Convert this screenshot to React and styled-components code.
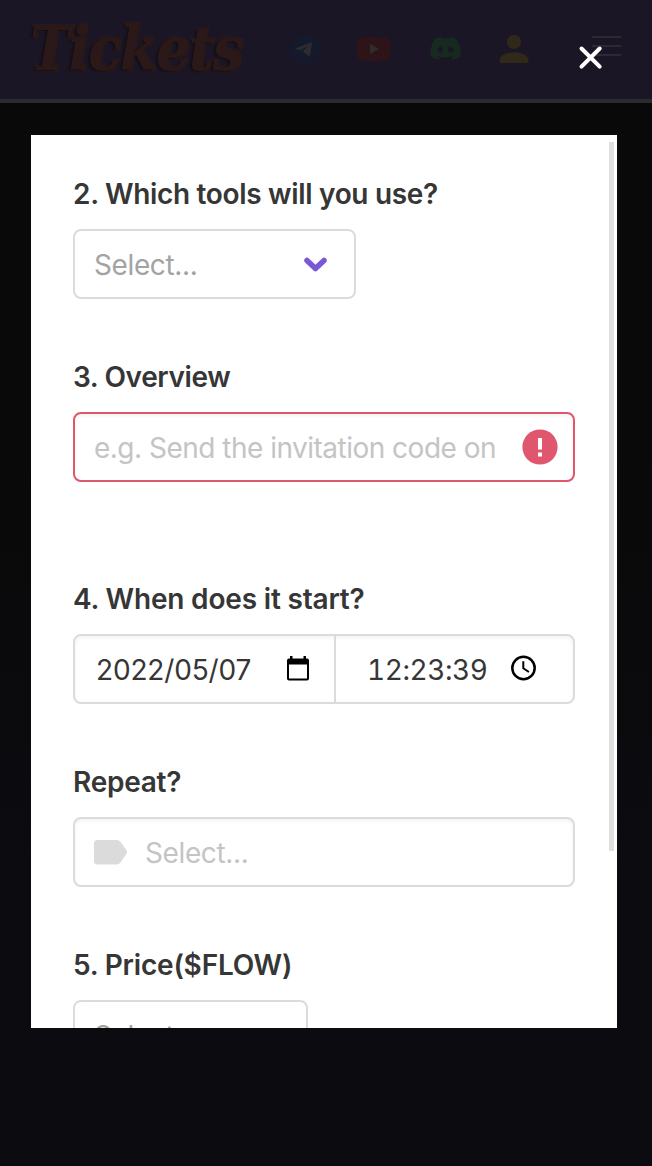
import React from "react";
import styled, { createGlobalStyle } from "styled-components";
import { FaDiscord } from "react-icons/fa";

const GlobalStyle = createGlobalStyle`
  * { box-sizing: border-box; }
  html, body { margin: 0; background: #0c0b10; }
  body { font-family: Inter, "Liberation Sans", sans-serif; overflow: hidden; }
`;

const Page = styled.div`
  position: relative;
  width: 652px;
  height: 1166px;
  overflow: hidden;
  background: linear-gradient(180deg, #090909 0%, #090909 40%, #0c0b10 75%, #0c0b10 100%);
`;

const Header = styled.header`
  display: flex;
  align-items: center;
  height: 103px;
  padding: 0 31px 2px 30px;
  background: #1b1626;
  border-bottom: 4px solid #2b2a2d;
`;

const Logo = styled.div`
  width: 259.5px;
  flex: none;
  padding-top: 3px;
  font: italic 700 59px/70px "DejaVu Serif Condensed", "DejaVu Serif", serif;
  font-stretch: condensed;
  letter-spacing: -0.7px;
  color: #2a1918;
  -webkit-text-stroke: 4px #2a1918;
  paint-order: stroke fill;
  text-shadow: -2px 1px 2px #110e18;
  white-space: nowrap;
`;

const Social = styled.nav`
  display: flex;
  align-items: center;
  gap: 37.5px;
  flex: 1;
  svg { display: block; flex: none; }
`;

const MenuLines = styled.div`
  display: flex;
  flex-direction: column;
  gap: 7px;
  width: 29px;
  margin-top: -5px;
`;

const MenuLine = styled.span`
  height: 2px;
  background: #2c2931;
`;

const CloseButton = styled.button`
  position: absolute;
  left: 578px;
  top: 45px;
  padding: 0;
  border: 0;
  background: none;
  line-height: 0;
`;

const Modal = styled.main`
  display: flex;
  width: 586px;
  height: 893px;
  margin: 32px 0 0 31px;
  padding: 7px 3px 0 42px;
  overflow: hidden;
  background: #fff;
`;

const Form = styled.form`
  width: 502px;
  flex: none;
  padding-top: 31px;
`;

const ScrollThumb = styled.div`
  width: 5px;
  height: 709px;
  margin-left: auto;
  background: #dfdfdf;
`;

const Field = styled.section`
  margin-bottom: ${(p) => p.$gap || "57px"};
`;

const Label = styled.h2`
  margin: 0 0 14px;
  font-size: 28px;
  font-weight: 600;
  line-height: 42px;
  letter-spacing: ${(p) => p.$tracking || "0"};
  color: #363636;
  white-space: nowrap;
`;

const Control = styled.div`
  display: flex;
  align-items: center;
  width: ${(p) => p.$width || "502px"};
  height: 70px;
  padding: 2px 15px 0 19px;
  border: 2px solid ${(p) => (p.$error ? "#e0566d" : "#dbdbdb")};
  border-radius: 8px;
  box-shadow: ${(p) => (p.$flat ? "none" : "inset 0 2px 4px rgba(10, 10, 10, 0.05)")};
  background: #fff;
  svg { display: block; flex: none; overflow: visible; }
`;

const Value = styled.span`
  flex: ${(p) => (p.$grow ? "1" : "none")};
  font-size: 28px;
  line-height: 42px;
  letter-spacing: ${(p) => p.$tracking || "-0.38px"};
  font-feature-settings: ${(p) => (p.$tabular ? '"tnum" 1, "calt" 0' : "normal")};
  color: ${(p) => p.$color || "#c4c4c4"};
  white-space: nowrap;
`;

const DateTime = styled(Control)`
  padding: 0;
`;

const DatePart = styled.div`
  display: flex;
  align-items: center;
  justify-content: space-between;
  height: 100%;
  width: ${(p) => p.$width};
  padding: ${(p) => p.$padding};
  border-right: ${(p) => (p.$divider ? "2px solid #dbdbdb" : "0")};
`;

const TelegramIcon = () => (
  <svg width="30" height="30" viewBox="0 0 30 30">
    <circle cx="15" cy="15" r="15" fill="#141a2b" />
    <path d="M5.3 14.6 20.8 8.3Q22.3 7.8 22 9.3L20 21.5Q19.7 22.8 18.5 22L12.5 17.2 18.8 11.7 10.5 16.3 5.6 15.5Q4.7 15.1 5.3 14.6Z" fill="#2b2b30" />
  </svg>
);

const YoutubeIcon = () => (
  <svg width="34" height="24" viewBox="0 0 34 24">
    <path d="M5 .7Q17-.6 29 .7 33.3 1 33.6 5.5 34.3 12 33.6 18.5 33.3 23 29 23.4 17 24.5 5 23.4.7 23 .4 18.5-.3 12 .4 5.5.7 1 5 .7Z" fill="#2d1419" />
    <path d="M13 7v10l9-5Z" fill="#302d2d" />
  </svg>
);

const PersonIcon = () => (
  <svg width="30" height="30" viewBox="0 0 30 30">
    <circle cx="15" cy="8" r="7.1" fill="#302819" />
    <path d="M.5 27.2C.5 21 7 18.5 15 18.5s14.5 2.5 14.5 8.7q0 1.8-1.7 1.8H2.2Q.5 29 .5 27.2Z" fill="#302819" />
  </svg>
);

export default function App() {
  return (
    <Page>
      <GlobalStyle />
      <Header>
        <Logo>Tickets</Logo>
        <Social>
          <TelegramIcon />
          <YoutubeIcon />
          <FaDiscord size={33} color="#172a20" />
          <PersonIcon />
        </Social>
        <MenuLines>
          <MenuLine />
          <MenuLine />
          <MenuLine />
        </MenuLines>
      </Header>

      <CloseButton type="button" aria-label="Close">
        <svg width="25" height="25" viewBox="0 0 25 25">
          <path d="m3.5 3.5 18.2 18.2M21.7 3.5 3.5 21.7" stroke="#fff" strokeWidth="4" strokeLinecap="round" />
        </svg>
      </CloseButton>

      <Modal>
        <Form>
          <Field>
            <Label $tracking="-0.32px">2. Which tools will you use?</Label>
            <Control $width="283px" $flat>
              <Value $grow $color="#a3a3a3">Select...</Value>
              <svg width="42" height="24" viewBox="0 0 42 24">
                <path d="m10 7.5 8.5 8 8.5-8" fill="none" stroke="#7957d5" strokeWidth="5.5" strokeLinecap="round" strokeLinejoin="round" />
              </svg>
            </Control>
          </Field>

          <Field $gap="96px">
            <Label $tracking="-0.38px">3. Overview</Label>
            <Control $error>
              <Value $grow $tracking="-0.51px">e.g. Send the invitation code on</Value>
              <svg width="36" height="36" viewBox="0 0 36 36">
                <circle cx="18" cy="17" r="17.6" fill="#e0566d" />
                <path d="M16 8h4v11.500h-4ZM16 22.500h4v4h-4Z" fill="#fff" />
              </svg>
            </Control>
          </Field>

          <Field>
            <Label $tracking="-0.18px">4. When does it start?</Label>
            <DateTime>
              <DatePart $width="261px" $padding="2px 24px 0 21px" $divider>
                <Value $color="#363636" $tracking="-0.15px">2022/05/07</Value>
                <svg width="24" height="28" viewBox="0 0 24 28">
                  <path d="M4 0h2.5v2.5h11V0H20v2.5h1.2Q23 2.5 23 4.5v18Q23 24.5 21 24.5H3Q1 24.5 1 22.5v-18q0-2 2-2h1ZM3 8.5v14h18v-14Z" fill="#000" fillRule="evenodd" />
                </svg>
              </DatePart>
              <DatePart $width="237px" $padding="2px 36px 0 31px">
                <Value $color="#363636" $tabular $tracking="-0.45px">12:23:39</Value>
                <svg width="26" height="30" viewBox="0 0 26 30">
                  <circle cx="12.5" cy="13" r="11.2" fill="none" stroke="#000" strokeWidth="2.5" />
                  <path d="M12.3 6.2v7.1l5.6 3.7" fill="none" stroke="#000" strokeWidth="2" />
                </svg>
              </DatePart>
            </DateTime>
          </Field>

          <Field>
            <Label $tracking="-0.25px">Repeat?</Label>
            <Control>
              <svg width="51" height="26" viewBox="0 0 51 26">
                <path d="M3.5 0H22.5q2.5 0 4 2l6 8.2q1.2 1.8 0 3.6L26.5 22.5q-1.5 2-4 2H3.5Q0 24.5 0 21V3.5Q0 0 3.5 0Z" fill="#dbdbdb" />
              </svg>
              <Value>Select...</Value>
            </Control>
          </Field>

          <Field>
            <Label $tracking="-0.2px">5. Price($FLOW)</Label>
            <Control $width="235px" $flat>
              <Value $color="#a3a3a3">Select...</Value>
            </Control>
          </Field>
        </Form>
        <ScrollThumb />
      </Modal>
    </Page>
  );
}
